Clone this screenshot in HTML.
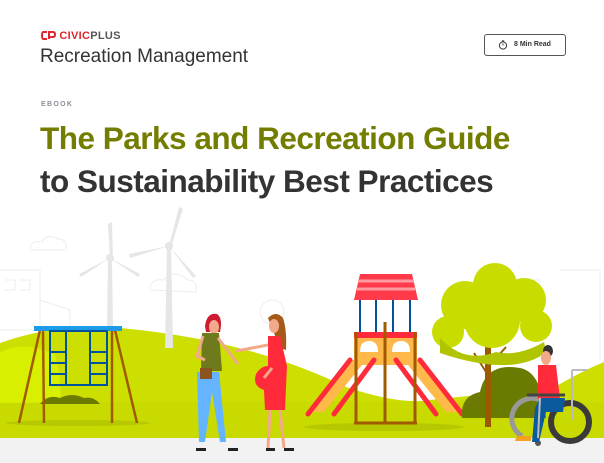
<!DOCTYPE html>
<html><head><meta charset="utf-8"><style>
body{margin:0;width:604px;height:463px;overflow:hidden;background:#fff;font-family:"Liberation Sans",sans-serif;position:relative}
.a{position:absolute}
</style></head><body>
<div class="a" style="left:41px;top:30px;font-size:11px;font-weight:bold;color:#e0232d;letter-spacing:0.3px">
<svg width="15" height="9" viewBox="0 0 15 9" style="vertical-align:-1px"><path d="M6 1H2.5Q1 1 1 4.5Q1 8 2.5 8H6M8 8V1H12Q14 1 14 3.5Q14 6 12 6H8" fill="none" stroke="#e0232d" stroke-width="2"/></svg>
CIVIC<span style="color:#555">PLUS</span></div>
<div class="a" style="left:40px;top:46px;font-size:19px;color:#333">Recreation Management</div>
<div class="a" style="left:484px;top:34px;width:80px;height:20px;border:1px solid #555;border-radius:3px;font-size:7px;font-weight:bold;color:#333;line-height:20px">
<svg width="10" height="10" viewBox="0 0 10 10" style="position:absolute;left:13px;top:5px"><circle cx="5" cy="5.5" r="3.6" fill="none" stroke="#333" stroke-width="1"/><path d="M5 2V0.8M3.8 0.8H6.2M5 5.5V3.5" stroke="#333" stroke-width="0.9"/></svg>
<span style="position:absolute;left:29px">8 Min Read</span></div>
<div class="a" style="left:41px;top:101px;font-size:7px;font-weight:bold;color:#8a9099;letter-spacing:1.3px">EBOOK</div>
<div class="a" style="left:40px;top:117px;font-size:31.5px;font-weight:bold;color:#737d00;letter-spacing:-0.5px;line-height:43px;white-space:nowrap">The Parks and Recreation Guide<br><span style="color:#333">to Sustainability Best Practices</span></div>
<svg class="a" style="left:0;top:200px" width="604" height="263" viewBox="0 200 604 263">
<g fill="none" stroke="#ececec" stroke-width="1">
<path d="M30 250q0-10 12-8q5-9 16-3q10 0 8 11z M0 270h40v60H0 M5 280h10v10H5 M20 280h10v10H20 M40 300l30 10v30 M150 290q0-12 14-10q8-12 24 0q10 0 8 12z M272 300a12 12 0 1 0 0.1 0 M500 280h40v80M560 270h40v90"/>
</g>
<path d="M0 343Q60 322 120 328Q250 340 346 387Q400 405 430 400L555 387Q580 372 604 362V440H0Z" fill="#cddf00"/>
<path d="M0 352Q25 340 55 355Q62 380 60 403H0Z" fill="#d8ef00"/>
<path d="M0 403Q300 400 604 403V438H0Z" fill="#c8da00"/>
<rect x="0" y="438" width="604" height="25" fill="#f2f2f2"/>
<g fill="#e6e6e6">
<path d="M108 258h4l1 70h-6z"/><path d="M167 246h4l2 102h-8z"/>
<path d="M110 258L108 224L112 222L113 258Z M110 258L79 274L81 277Z M110 258L140 274L138 277Z"/>
<path d="M169 246L179 207L183 209L171 247Z M169 246L129 254L130 258Z M169 246L196 276L193 278Z"/>
<circle cx="110" cy="258" r="4"/><circle cx="169" cy="246" r="4"/>
</g>
<path d="M40 404q8-10 20-6q12-6 24 0q10-2 16 6z" fill="#6b7a00"/>
<ellipse cx="78" cy="423" rx="72" ry="3" fill="#b6c800"/>
<g stroke="#a05a00" stroke-width="2.5"><path d="M40 330L19 423M43 330L44 423M112 330L112 423M115 330L137 423"/></g>
<rect x="34" y="326" width="88" height="5" fill="#1e9be8"/>
<g fill="none" stroke="#00529b" stroke-width="2"><rect x="50" y="331" width="57" height="54"/><path d="M66 331V385M90 331V385M50 352H66M50 363H66M50 374H66M90 352H107M90 363H107M90 374H107"/></g>
<!-- woman 1 -->
<path d="M205 326q2-14 12-12q6 4 3 18h-14z" fill="#d01a30"/>
<ellipse cx="214" cy="327" rx="5" ry="7" fill="#f2a98a"/>
<path d="M202 333h17l3 38h-21z" fill="#6e7a1c"/>
<path d="M197 372h22l7 70h-6l-8-50l-7 50h-6z" fill="#64b4ff"/>
<rect x="200" y="368" width="12" height="11" fill="#8a5320"/>
<path d="M203 336l-6 20l8 4M218 338l20 26" stroke="#f2a98a" stroke-width="3" fill="none"/>
<path d="M196 448h10v3h-10zM228 448h10v3h-10z" fill="#222"/>
<!-- woman 2 -->
<path d="M268 318q8-8 15 0q4 12 3 32l-6-2z" fill="#a55a1a"/>
<ellipse cx="274" cy="326" rx="5" ry="7" fill="#f2a98a"/>
<path d="M268 336h12l7 30l-2 44h-20l-1-20q-12-4-8-16q5-8 12-8z" fill="#ff2a3a"/>
<path d="M268 345l-32 6M264 378l8-10" stroke="#f2a98a" stroke-width="3" fill="none"/>
<path d="M270 410l-2 38M280 410l4 38" stroke="#f2a98a" stroke-width="3"/>
<path d="M266 448h9v3h-9zM284 448h10v3h-10z" fill="#222"/>
<!-- playground -->
<ellipse cx="384" cy="427" rx="80" ry="4" fill="#b6c800"/>
<path d="M360 274h52l6 26h-64z" fill="#ff3a4a"/>
<path d="M358 281h56M357 289h58" stroke="#ff9aa0" stroke-width="3"/>
<g stroke="#00529b" stroke-width="2"><path d="M360 300v33M376 300v33M393 300v33M410 300v33"/></g>
<rect x="354" y="332" width="63" height="33" fill="#ffb84a"/>
<rect x="354" y="332" width="63" height="6" fill="#ff2a3a"/>
<path d="M360 352q0-11 9-11q9 0 9 11zM392 352q0-11 9-11q9 0 9 11z" fill="#fff"/>
<path d="M352 360l-40 52h12l42-52zM418 360l40 52h-12l-42-52z" fill="#ffb84a"/>
<path d="M350 360l-42 54M374 360l-40 54M396 360l40 54M420 360l42 54" stroke="#ff2a3a" stroke-width="5" fill="none" stroke-linecap="round"/>
<g stroke="#a05a00" stroke-width="3"><path d="M356 332v92M415 332v92M385 322v102M354 423h63"/></g>
<!-- tree -->
<path d="M462 418q-2-22 18-26q6-30 40-24q22 4 26 50z" fill="#6b7a00"/>
<rect x="485" y="340" width="6" height="87" fill="#9b5a00"/>
<path d="M488 375l-14-22M490 365l16-18" stroke="#9b5a00" stroke-width="2"/>
<g fill="#c9dc00"><circle cx="495" cy="285" r="22"/><circle cx="465" cy="305" r="24"/><circle cx="448" cy="332" r="16"/><circle cx="524" cy="300" r="22"/><circle cx="536" cy="326" r="16"/><circle cx="492" cy="320" r="28"/></g>
<path d="M440 338q24 26 56 14q22 5 48-10q3 10-5 15q-34 18-99-4z" fill="#b0c400"/>
<!-- wheelchair man -->
<circle cx="570" cy="422" r="19" fill="none" stroke="#3a3a3a" stroke-width="6"/>
<path d="M522 436a20 20 0 0 1 20-35" fill="none" stroke="#999" stroke-width="5"/>
<circle cx="538" cy="443" r="3" fill="#555"/>
<ellipse cx="548" cy="351" rx="5" ry="6" fill="#333"/>
<ellipse cx="546" cy="358" rx="5" ry="7" fill="#f2a98a"/>
<path d="M538 365h18l4 34h-22z" fill="#ff2a3a"/>
<path d="M540 398h25l-2 14h-17l-7 30h-7l3-34z" fill="#0a5b9e"/>
<path d="M527 395h38" stroke="#444" stroke-width="3"/>
<path d="M572 370h16M572 370v50M540 398l-2 40" stroke="#bbb" stroke-width="2" fill="none"/>
<path d="M517 436h14v5h-16z" fill="#f5a020"/>
</svg>
</body></html>
